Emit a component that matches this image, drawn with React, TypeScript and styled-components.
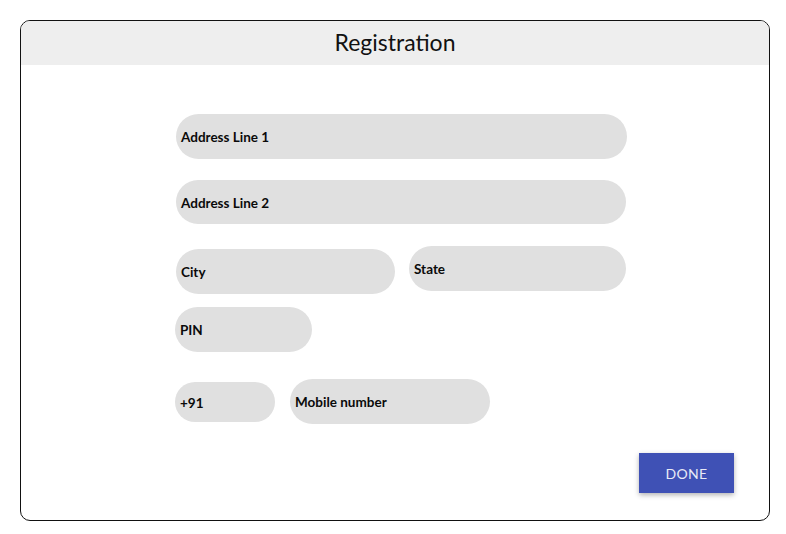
import React from "react";
import styled, { createGlobalStyle } from "styled-components";

const Global = createGlobalStyle`
  html, body { margin: 0; padding: 0; background: #ffffff; }
  body { font-family: Lato, "Open Sans", sans-serif; }
  * { box-sizing: border-box; }
`;

const Card = styled.div`
  margin: 20px 0 0 20px;
  width: 750px;
  height: 501px;
  border: 1px solid #111;
  border-radius: 10px;
  overflow: hidden;
  display: flex;
  flex-direction: column;
  background: #fff;
`;

const Header = styled.div`
  height: 44px;
  background: #eeeeee;
  display: flex;
  align-items: center;
  justify-content: center;
  font-size: 23px;
  font-weight: 400;
  color: #111;
  padding-bottom: 2px;
`;

const Body = styled.div`
  flex: 1;
  display: flex;
  flex-direction: column;
  padding: 49px 35px 0 155px;
`;

const Row = styled.div<{ $mt: number; $gap?: number }>`
  display: flex;
  align-items: flex-start;
  gap: ${(p) => p.$gap ?? 14}px;
  margin-top: ${(p) => p.$mt}px;
`;

const Field = styled.div<{ $w: number; $h?: number; $dy?: number; $dx?: number }>`
  width: ${(p) => p.$w}px;
  height: ${(p) => p.$h ?? 45}px;
  margin-top: ${(p) => p.$dy ?? 0}px;
  margin-left: ${(p) => p.$dx ?? 0}px;
  border-radius: 23px;
  background: #e0e0e0;
  display: flex;
  align-items: center;
  padding: 1px 0 0 5px;
  font-size: 13.5px;
  font-weight: 700;
  color: #0a0a0a;
`;

const Footer = styled.div`
  display: flex;
  justify-content: flex-end;
  margin-top: 29px;
`;

const DoneButton = styled.button`
  width: 95px;
  height: 40px;
  border: none;
  background: #3f51b5;
  color: #e8eaf6;
  font-family: Lato, "Open Sans", sans-serif;
  font-size: 14px;
  font-weight: 400;
  letter-spacing: 0.3px;
  box-shadow: 0 2px 5px rgba(0, 0, 0, 0.3);
  cursor: pointer;
`;

export default function App() {
  return (
    <>
      <Global />
      <Card>
        <Header>Registration</Header>
        <Body>
          <Row $mt={0}>
            <Field $w={451}>Address Line 1</Field>
          </Row>
          <Row $mt={21}>
            <Field $w={450} $h={44}>Address Line 2</Field>
          </Row>
          <Row $mt={22}>
            <Field $w={219} $dy={3}>City</Field>
            <Field $w={217}>State</Field>
          </Row>
          <Row $mt={13}>
            <Field $w={137} $dx={-1}>PIN</Field>
          </Row>
          <Row $mt={27} $gap={15}>
            <Field $w={100} $h={40} $dy={3} $dx={-1}>+91</Field>
            <Field $w={200}>Mobile number</Field>
          </Row>
          <Footer>
            <DoneButton>DONE</DoneButton>
          </Footer>
        </Body>
      </Card>
    </>
  );
}
